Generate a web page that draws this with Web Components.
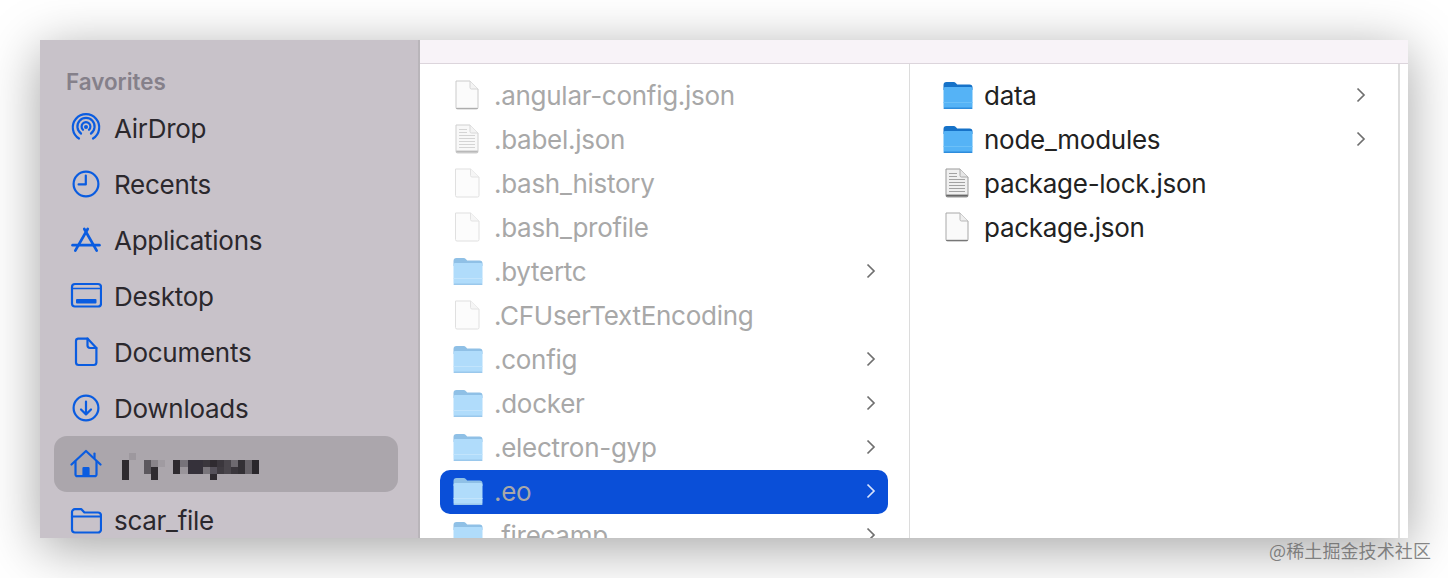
<!DOCTYPE html>
<html lang="en"><head><meta charset="utf-8"><title>Finder</title>
<style>
html,body{margin:0;height:100%;background:#fff;overflow:hidden}
body{font-family:Inter,"Noto Sans CJK SC",sans-serif;padding:40px 40px 0;box-sizing:border-box;height:578px;display:flex;flex-direction:column}
</style></head><body>
<finder-window>
  <finder-sidebar slot="sidebar" heading="Favorites">
    <side-item icon="airdrop">AirDrop</side-item>
    <side-item icon="clock">Recents</side-item>
    <side-item icon="apps">Applications</side-item>
    <side-item icon="desktop">Desktop</side-item>
    <side-item icon="doc">Documents</side-item>
    <side-item icon="download">Downloads</side-item>
    <side-item icon="home" active><redacted-name></redacted-name></side-item>
    <side-item icon="folder">scar_file</side-item>
  </finder-sidebar>
  <finder-column slot="col1" dim>
    <file-row icon="file">.angular-config.json</file-row>
    <file-row icon="filetext">.babel.json</file-row>
    <file-row icon="blank">.bash_history</file-row>
    <file-row icon="blank">.bash_profile</file-row>
    <file-row icon="folder" chevron>.bytertc</file-row>
    <file-row icon="blank">.CFUserTextEncoding</file-row>
    <file-row icon="folder" chevron>.config</file-row>
    <file-row icon="folder" chevron>.docker</file-row>
    <file-row icon="folder" chevron>.electron-gyp</file-row>
    <file-row icon="folder" chevron selected>.eo</file-row>
    <file-row icon="folder" chevron>.firecamp</file-row>
  </finder-column>
  <finder-column slot="col2">
    <file-row icon="folder" chevron>data</file-row>
    <file-row icon="folder" chevron>node_modules</file-row>
    <file-row icon="filetext">package-lock.json</file-row>
    <file-row icon="file">package.json</file-row>
  </finder-column>
</finder-window>
<water-mark>@稀土掘金技术社区</water-mark>
<script>
function make(tag,html,setup){
  customElements.define(tag,class extends HTMLElement{
    constructor(){super();this.attachShadow({mode:'open'}).innerHTML=html;}
    connectedCallback(){if(setup)setup(this);}
  });
}
const S='fill="none" stroke="#0a5ce0" stroke-linecap="round" stroke-linejoin="round"';
const SIDE={
 airdrop:`<g ${S} stroke-width="2.2"><path d="M9 26.5A13.2 13.2 0 1 1 23 26.5"/><path d="M11 21.5A8.6 8.6 0 1 1 21 21.5"/><path d="M13 17.8A4.4 4.4 0 1 1 19 17.8"/></g><circle cx="16" cy="15" r="2" fill="#0a5ce0"/>`,
 clock:`<g ${S} stroke-width="2.2"><circle cx="16" cy="16" r="12.4"/><path d="M15.8 7.5V16.4H8.6"/></g>`,
 apps:`<g ${S} stroke-width="2.7"><path d="M14.3 5 26.7 26.6M17.7 5 5.3 26.6"/><path d="M2.6 21.2H29.4"/></g>`,
 desktop:`<rect x="2" y="4" width="29" height="22.5" rx="3" ${S} stroke-width="2.2"/><path d="M2 8.5H31" ${S} stroke-width="1.6"/><rect x="6" y="19" width="20.5" height="4.6" rx="1" fill="#0a5ce0"/>`,
 doc:`<g ${S} stroke-width="2.2"><path d="M8 2.6H17.5L26.4 12V26.5A2.6 2.6 0 0 1 23.8 29H8.6A2.6 2.6 0 0 1 6 26.5V5A2.4 2.4 0 0 1 8 2.6Z"/><path d="M17.5 2.6V9.5A2.6 2.6 0 0 0 20 12H26.4"/></g>`,
 download:`<g ${S} stroke-width="2.2"><circle cx="16" cy="16" r="12.4"/><path d="M16 9.5V22M11 17.5 16 22.4 21 17.5"/></g>`,
 home:`<g ${S} stroke-width="2.2"><path d="M1.5 16.5 16 3 30.5 16.5"/><path d="M5.5 13.5V26.4A1.8 1.8 0 0 0 7.3 28.2H24.7A1.8 1.8 0 0 0 26.5 26.4V13.5"/><path d="M24.5 5.5V10"/></g><path d="M12.4 28.4V20.2A1.2 1.2 0 0 1 13.6 19H18.4A1.2 1.2 0 0 1 19.6 20.2V28.4Z" fill="#0a5ce0"/>`,
 folder:`<g ${S} stroke-width="2.2"><path d="M2 8.5A3 3 0 0 1 5 5.2H11.4L14.4 8.5H28A3 3 0 0 1 31 11.4V25.5A3 3 0 0 1 28 28.5H5A3 3 0 0 1 2 25.5Z"/><path d="M2 12.5H31"/></g>`
};
const FILE={
 folder:`<path d="M0.5 5A3 3 0 0 1 3.5 2H10.5Q12 2 13 3.2L14.2 4.5H26.5A3 3 0 0 1 29.5 7.5V10H0.5Z" style="fill:var(--ft,#1672c8)"/><path d="M0.5 8.5A1.5 1.5 0 0 1 2 7H28A1.5 1.5 0 0 1 29.5 8.5V27A2 2 0 0 1 27.5 29H2.5A2 2 0 0 1 .5 27Z" style="fill:var(--fb,#55b3f6)"/><rect x=".5" y="22" width="29" height="1" style="fill:var(--fl,#6cc0f8)"/><rect x=".5" y="27.6" width="29" height="1.4" rx=".7" style="fill:var(--fe,#2e8cdc)"/>`,
 file:`<path d="M3 1H17L25 9V27.5A1.5 1.5 0 0 1 23.5 29H4.5A1.5 1.5 0 0 1 3 27.5Z" fill="#fafafa" stroke="#a8a8a8" stroke-width="1"/><path d="M17 1V7.5A1.5 1.5 0 0 0 18.5 9H25" fill="#eee" stroke="#b8b8b8"/><path d="M3.2 28.4H24.8" stroke="#777" stroke-width="1.2"/>`,
 blank:`<path d="M2.5 1H17.5L26 9V27.5A1.5 1.5 0 0 1 24.5 29H4A1.5 1.5 0 0 1 2.5 27.5Z" fill="#fbfbfb" stroke="#cdcdcd" stroke-width="1"/><path d="M17.5 1V7.5A1.5 1.5 0 0 0 19 9H26" fill="#f1f1f1" stroke="#d2d2d2"/>`,
 filetext:`<path d="M3 1H17L25 9V27.5A1.5 1.5 0 0 1 23.5 29H4.5A1.5 1.5 0 0 1 3 27.5Z" fill="#f0f0f0" stroke="#999" stroke-width="1"/><path d="M17 1V7.5A1.5 1.5 0 0 0 18.5 9H25" fill="#e6e6e6" stroke="#aaa"/><g class="ln"><path d="M6 5.5H14M6 8.5H14M6 11.5H22M6 14.5H22M6 17.5H22M6 20.5H22M6 23.5H22" stroke="#a2a2a2" stroke-width="1.1"/></g><path d="M3.2 27.6H24.8" stroke="#666" stroke-width="2"/>`
};
make('finder-window',`<style>
:host{display:grid;grid-template-columns:380px 490px 1fr;grid-template-rows:24px 1fr;height:498px;width:1368px;flex:none;background:#fff;overflow:visible;box-shadow:0 10px 50px rgba(0,0,0,.36)}
.top{grid-column:2/4;background:#f8f3f8;border-bottom:1px solid #dcd5dc;box-sizing:border-box}
::slotted([slot=sidebar]){grid-column:1;grid-row:1/3}
</style><slot name="sidebar"></slot><div class="top"></div><slot name="col1"></slot><slot name="col2"></slot>`);
make('finder-sidebar',`<style>
:host{display:block;box-sizing:border-box;background:#c8c2c9;border-right:2px solid #b9b5ba;overflow:hidden;height:498px;padding:0 20px 0 14px;font-family:Inter,sans-serif}
.h{height:60px;padding:24px 0 0 12px;box-sizing:border-box;font-size:22.4px;line-height:36px;font-weight:600;color:#85808a}
</style><div class="h"></div><slot></slot>`,el=>{el.shadowRoot.querySelector('.h').textContent=el.getAttribute('heading');});
make('side-item',`<style>
:host{display:flex;align-items:center;gap:12px;height:56px;padding-left:16px;border-radius:13px;font-size:26px;color:#2b282d;font-family:Inter,sans-serif;letter-spacing:-.28px;white-space:nowrap}
:host([active]){background:#aba6ac}
svg{width:32px;height:32px;flex:none}
</style><svg viewBox="0 0 32 32"></svg><slot></slot>`,el=>{el.shadowRoot.querySelector('svg').innerHTML=SIDE[el.getAttribute('icon')];});
make('redacted-name',`<style>
:host{display:block;width:150px;height:30px;margin-top:4px}svg{display:block;width:150px;height:30px}
</style><svg viewBox="0 0 150 30" shape-rendering="crispEdges">
<rect x="8" y="9" width="7" height="20" fill="#2f2b30"/><rect x="15" y="2" width="7" height="7" fill="#9d989e"/>
<rect x="30" y="9" width="7" height="14" fill="#5c585e"/><rect x="37" y="16" width="7" height="13" fill="#2f2b30"/><rect x="37" y="9" width="7" height="7" fill="#89848a"/><rect x="44" y="9" width="7" height="7" fill="#a09ba1"/>
<rect x="59" y="9" width="7" height="14" fill="#2f2b30"/><rect x="66" y="9" width="8" height="7" fill="#77737a"/><rect x="66" y="16" width="8" height="7" fill="#9a959b"/><rect x="74" y="9" width="15" height="14" fill="#35313a"/><rect x="89" y="9" width="7" height="7" fill="#3a363c"/><rect x="89" y="16" width="7" height="7" fill="#7a767c"/><rect x="96" y="9" width="7" height="7" fill="#2f2b30"/><rect x="96" y="16" width="7" height="7" fill="#55515a"/><rect x="96" y="23" width="7" height="6" fill="#2f2b30"/><rect x="103" y="9" width="7" height="7" fill="#3b373d"/><rect x="103" y="16" width="7" height="7" fill="#3f3b41"/><rect x="110" y="9" width="7" height="14" fill="#4a464c"/><rect x="117" y="16" width="7" height="7" fill="#3a363c"/><rect x="117" y="9" width="7" height="7" fill="#6e6a70"/><rect x="124" y="9" width="7" height="14" fill="#333035"/><rect x="131" y="9" width="7" height="14" fill="#666268"/><rect x="138" y="9" width="7" height="14" fill="#2a272c"/>
</svg>`);
make('finder-column',`<style>
:host{display:block;overflow:hidden;box-sizing:border-box;height:474px;padding:10px 21px 0 20px;background:#fff;border-right:1px solid #dcdcdc;font-family:Inter,sans-serif}
:host(:not([dim])){border-right:2px solid #dddddd;margin-right:8px;padding-right:20px}
</style><slot></slot>`);
make('file-row',`<style>
:host{display:flex;align-items:center;box-sizing:border-box;height:44px;border-radius:10px;padding:0 11px 2px 13px;font-size:26px;letter-spacing:-.28px;white-space:nowrap;color:#222}
:host-context(finder-column[dim]){color:#a8a8a8;--ft:#8fc0e6;--fb:#b0dcfb;--fl:#c2e4fc;--fe:#9ac8ec}
:host([selected]){background:#0a4fd8;color:#5f8df0;--ft:#78aee6;--fb:#a8d6fa;--fl:#bfe2fb;--fe:#8fbdea}
.i{width:30px;height:30px;flex:none;margin-right:11px}
:host-context(finder-column[dim]) .i{opacity:.6}
:host-context(finder-column[dim]):host([icon=folder]) .i{opacity:1}
:host-context(finder-column[dim]):host([icon=filetext]) .i{opacity:.45}
.t{flex:1}
.c{width:12px;height:18px;flex:none;visibility:hidden}
:host([chevron]) .c{visibility:visible}
:host([selected]) .c path{stroke:#d8e2fb}
</style><svg class="i" viewBox="0 0 30 30"></svg><span class="t"><slot></slot></span><svg class="c" viewBox="0 0 12 18"><path d="M2.5 2.5 9 9 2.5 15.5" fill="none" stroke="#6f6f6f" stroke-width="1.7"/></svg>`,
el=>{el.shadowRoot.querySelector('.i').insertAdjacentHTML('beforeend',FILE[el.getAttribute('icon')]);});
make('water-mark',`<style>
:host{display:block;align-self:flex-end;margin-right:-23px;margin-top:1px;height:22px;font:18px/22px "Noto Sans CJK SC",sans-serif;color:rgba(90,90,90,.72);letter-spacing:.1px;white-space:nowrap}
</style><slot></slot>`);
</script>
</body></html>
